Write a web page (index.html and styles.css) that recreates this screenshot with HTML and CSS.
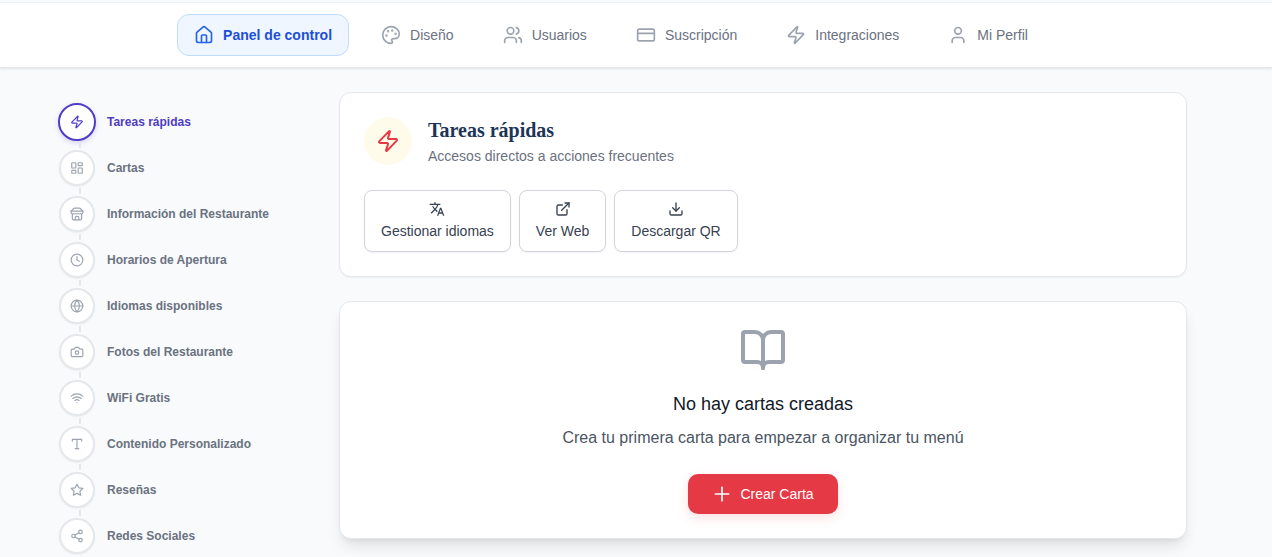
FILE: index.html
```html
<!DOCTYPE html>
<html lang="es">
<head>
<meta charset="utf-8">
<meta name="viewport" content="width=device-width, initial-scale=1">
<title>Panel de control</title>
<link rel="stylesheet" href="styles.css">
</head>
<body>
<header class="topbar">
  <nav class="tabs" aria-label="Principal">
    <a class="tab tab-active" href="#panel" aria-current="page">
      <svg class="icon" viewBox="0 0 24 24"><path d="M15 21v-8a1 1 0 0 0-1-1h-4a1 1 0 0 0-1 1v8"/><path d="M3 10a2 2 0 0 1 .709-1.528l7-5.999a2 2 0 0 1 2.582 0l7 5.999A2 2 0 0 1 21 10v9a2 2 0 0 1-2 2H5a2 2 0 0 1-2-2z"/></svg>
      Panel de control
    </a>
    <a class="tab" href="#diseno">
      <svg class="icon" viewBox="0 0 24 24"><circle class="dot" cx="13.5" cy="6.5" r=".5"/><circle class="dot" cx="17.5" cy="10.5" r=".5"/><circle class="dot" cx="8.5" cy="7.5" r=".5"/><circle class="dot" cx="6.5" cy="12.5" r=".5"/><path d="M12 2C6.5 2 2 6.5 2 12s4.5 10 10 10c.926 0 1.648-.746 1.648-1.688 0-.437-.18-.835-.437-1.125-.29-.289-.438-.652-.438-1.125a1.64 1.64 0 0 1 1.668-1.668h1.996c3.051 0 5.555-2.503 5.555-5.554C21.965 6.012 17.461 2 12 2z"/></svg>
      Diseño
    </a>
    <a class="tab" href="#usuarios">
      <svg class="icon" viewBox="0 0 24 24"><path d="M16 21v-2a4 4 0 0 0-4-4H6a4 4 0 0 0-4 4v2"/><circle cx="9" cy="7" r="4"/><path d="M22 21v-2a4 4 0 0 0-3-3.87"/><path d="M16 3.13a4 4 0 0 1 0 7.75"/></svg>
      Usuarios
    </a>
    <a class="tab" href="#suscripcion">
      <svg class="icon" viewBox="0 0 24 24"><rect width="20" height="14" x="2" y="5" rx="2"/><path d="M2 10h20"/></svg>
      Suscripción
    </a>
    <a class="tab" href="#integraciones">
      <svg class="icon" viewBox="0 0 24 24"><path d="M4 14a1 1 0 0 1-.78-1.63l9.9-10.2a.5.5 0 0 1 .86.46l-1.92 6.02A1 1 0 0 0 13 10h7a1 1 0 0 1 .78 1.63l-9.9 10.2a.5.5 0 0 1-.86-.46l1.92-6.02A1 1 0 0 0 11 14z"/></svg>
      Integraciones
    </a>
    <a class="tab" href="#perfil">
      <svg class="icon" viewBox="0 0 24 24"><path d="M19 21v-2a4 4 0 0 0-4-4H9a4 4 0 0 0-4 4v2"/><circle cx="12" cy="7" r="4"/></svg>
      Mi Perfil
    </a>
  </nav>
</header>

<div class="layout">
  <aside class="sidebar">
    <ul class="steps">
      <li class="step"><a class="step-link step-active" href="#tareas"><span class="bubble"><svg class="icon" viewBox="0 0 24 24"><path d="M4 14a1 1 0 0 1-.78-1.63l9.9-10.2a.5.5 0 0 1 .86.46l-1.92 6.02A1 1 0 0 0 13 10h7a1 1 0 0 1 .78 1.63l-9.9 10.2a.5.5 0 0 1-.86-.46l1.92-6.02A1 1 0 0 0 11 14z"/></svg></span>Tareas rápidas</a></li>
      <li class="step"><a class="step-link" href="#cartas"><span class="bubble"><svg class="icon" viewBox="0 0 24 24"><rect width="7" height="9" x="3" y="3" rx="1"/><rect width="7" height="5" x="14" y="3" rx="1"/><rect width="7" height="9" x="14" y="12" rx="1"/><rect width="7" height="5" x="3" y="16" rx="1"/></svg></span>Cartas</a></li>
      <li class="step"><a class="step-link" href="#informacion"><span class="bubble"><svg class="icon" viewBox="0 0 24 24"><path d="m2 7 4.41-4.41A2 2 0 0 1 7.83 2h8.34a2 2 0 0 1 1.42.59L22 7"/><path d="M4 12v8a2 2 0 0 0 2 2h12a2 2 0 0 0 2-2v-8"/><path d="M15 22v-4a2 2 0 0 0-2-2h-2a2 2 0 0 0-2 2v4"/><path d="M2 7h20"/><path d="M22 7v3a2 2 0 0 1-2 2 2.7 2.7 0 0 1-1.59-.63.7.7 0 0 0-.82 0A2.7 2.7 0 0 1 16 12a2.7 2.7 0 0 1-1.59-.63.7.7 0 0 0-.82 0A2.7 2.7 0 0 1 12 12a2.7 2.7 0 0 1-1.59-.63.7.7 0 0 0-.82 0A2.7 2.7 0 0 1 8 12a2.7 2.7 0 0 1-1.59-.63.7.7 0 0 0-.82 0A2.7 2.7 0 0 1 4 12a2 2 0 0 1-2-2V7"/></svg></span>Información del Restaurante</a></li>
      <li class="step"><a class="step-link" href="#horarios"><span class="bubble"><svg class="icon" viewBox="0 0 24 24"><circle cx="12" cy="12" r="10"/><path d="M12 6v6l4 2"/></svg></span>Horarios de Apertura</a></li>
      <li class="step"><a class="step-link" href="#idiomas"><span class="bubble"><svg class="icon" viewBox="0 0 24 24"><circle cx="12" cy="12" r="10"/><path d="M12 2a14.5 14.5 0 0 0 0 20 14.5 14.5 0 0 0 0-20"/><path d="M2 12h20"/></svg></span>Idiomas disponibles</a></li>
      <li class="step"><a class="step-link" href="#fotos"><span class="bubble"><svg class="icon" viewBox="0 0 24 24"><path d="M14.5 4h-5L7 7H4a2 2 0 0 0-2 2v9a2 2 0 0 0 2 2h16a2 2 0 0 0 2-2V9a2 2 0 0 0-2-2h-3z"/><circle cx="12" cy="13" r="3"/></svg></span>Fotos del Restaurante</a></li>
      <li class="step"><a class="step-link" href="#wifi"><span class="bubble"><svg class="icon" viewBox="0 0 24 24"><path d="M12 20h.01"/><path d="M2 8.82a15 15 0 0 1 20 0"/><path d="M5 12.859a10 10 0 0 1 14 0"/><path d="M8.5 16.429a5 5 0 0 1 7 0"/></svg></span>WiFi Gratis</a></li>
      <li class="step"><a class="step-link" href="#contenido"><span class="bubble"><svg class="icon" viewBox="0 0 24 24"><path d="M4 7V4h16v3"/><path d="M9 20h6"/><path d="M12 4v16"/></svg></span>Contenido Personalizado</a></li>
      <li class="step"><a class="step-link" href="#resenas"><span class="bubble"><svg class="icon" viewBox="0 0 24 24"><path d="M12 2l3.09 6.26L22 9.27l-5 4.87 1.18 6.88L12 17.77l-6.18 3.25L7 14.14 2 9.27l6.91-1.01z"/></svg></span>Reseñas</a></li>
      <li class="step"><a class="step-link" href="#redes"><span class="bubble"><svg class="icon" viewBox="0 0 24 24"><circle cx="18" cy="5" r="3"/><circle cx="6" cy="12" r="3"/><circle cx="18" cy="19" r="3"/><path d="M8.59 13.51l6.83 3.98"/><path d="M15.41 6.51l-6.82 3.98"/></svg></span>Redes Sociales</a></li>
    </ul>
  </aside>

  <main class="content">
    <section class="card" id="tareas">
      <div class="card-head">
        <span class="badge"><svg class="icon" viewBox="0 0 24 24"><path d="M4 14a1 1 0 0 1-.78-1.63l9.9-10.2a.5.5 0 0 1 .86.46l-1.92 6.02A1 1 0 0 0 13 10h7a1 1 0 0 1 .78 1.63l-9.9 10.2a.5.5 0 0 1-.86-.46l1.92-6.02A1 1 0 0 0 11 14z"/></svg></span>
        <div class="card-heading">
          <h2 class="card-title">Tareas rápidas</h2>
          <p class="card-subtitle">Accesos directos a acciones frecuentes</p>
        </div>
      </div>
      <div class="actions">
        <button class="action" type="button">
          <svg class="icon icon-solid" viewBox="0 0 24 24"><path d="m12.87 15.07-2.54-2.51.03-.03A17.52 17.52 0 0 0 14.07 6H17V4h-7V2H8v2H1v1.99h11.17C11.5 7.92 10.44 9.75 9 11.35 8.07 10.32 7.3 9.19 6.69 8h-2c.73 1.63 1.73 3.17 2.98 4.56l-5.09 5.02L4 19l5-5 3.11 3.11.76-2.04zM18.5 10h-2L12 22h2l1.12-3h4.75L21 22h2l-4.5-12zm-2.62 7 1.62-4.33L19.12 17h-3.24z"/></svg>
          Gestionar idiomas
        </button>
        <button class="action" type="button">
          <svg class="icon" viewBox="0 0 24 24"><path d="M15 3h6v6"/><path d="M10 14 21 3"/><path d="M18 13v6a2 2 0 0 1-2 2H5a2 2 0 0 1-2-2V8a2 2 0 0 1 2-2h6"/></svg>
          Ver Web
        </button>
        <button class="action" type="button">
          <svg class="icon" viewBox="0 0 24 24"><path d="M21 15v4a2 2 0 0 1-2 2H5a2 2 0 0 1-2-2v-4"/><path d="m7 10 5 5 5-5"/><path d="M12 15V3"/></svg>
          Descargar QR
        </button>
      </div>
    </section>

    <section class="card card-empty" id="cartas">
      <svg class="icon book" viewBox="0 0 24 24"><path d="M12 7v14"/><path d="M3 18a1 1 0 0 1-1-1V4a1 1 0 0 1 1-1h5a4 4 0 0 1 4 4 4 4 0 0 1 4-4h5a1 1 0 0 1 1 1v13a1 1 0 0 1-1 1h-6a3 3 0 0 0-3 3 3 3 0 0 0-3-3z"/></svg>
      <h3 class="empty-title">No hay cartas creadas</h3>
      <p class="empty-text">Crea tu primera carta para empezar a organizar tu menú</p>
      <button class="create" type="button">
        <svg class="icon" viewBox="0 0 24 24"><path d="M4 12h16"/><path d="M12 4v16"/></svg>
        Crear Carta
      </button>
    </section>
  </main>
</div>
</body>
</html>
```
FILE: styles.css
```css
* {
  box-sizing: border-box;
}

body {
  margin: 0;
  background: #f8fafc;
  color: #6b7280;
  font-family: "Liberation Sans", Arial, sans-serif;
  font-size: 14px;
  line-height: 20px;
}

h2, h3, p, ul {
  margin: 0;
  padding: 0;
}

a {
  color: inherit;
  text-decoration: none;
}

button {
  font: inherit;
  cursor: pointer;
}

.icon {
  display: block;
  flex: none;
  width: 20px;
  height: 20px;
  fill: none;
  stroke: currentColor;
  stroke-width: 2;
  stroke-linecap: round;
  stroke-linejoin: round;
}

.icon .dot {
  fill: currentColor;
}

.icon-solid {
  fill: currentColor;
  stroke: none;
}

/* Top navigation */
.topbar {
  margin-top: 2px;
  padding: 11px 50px 11px 0;
  background: #fff;
  border-top: 1px solid #eceef1;
  border-bottom: 1px solid #e5e7eb;
  box-shadow: 0 1px 2px rgba(0, 0, 0, 0.1);
}

.tabs {
  display: flex;
  justify-content: center;
  gap: 15px;
}

.tab {
  display: flex;
  align-items: center;
  gap: 9px;
  padding: 10px 16px;
  border: 1px solid transparent;
  border-radius: 12px;
  white-space: nowrap;
}

.tab .icon {
  color: #9ca3af;
}

.tab-active {
  background: #eff6ff;
  border-color: #bfdbfe;
  color: #1d4ed8;
  font-weight: 700;
}

.tab-active .icon {
  color: #2563eb;
}

/* Page columns */
.layout {
  display: grid;
  grid-template-columns: 256px minmax(0, 1fr);
  gap: 24px;
  padding: 24px 85px 0 59px;
}

.sidebar {
  padding-top: 7px;
}

.steps {
  list-style: none;
}

.step-link {
  display: flex;
  align-items: center;
  gap: 12px;
  height: 46px;
  font-size: 12px;
  font-weight: 700;
}

.bubble {
  display: grid;
  place-items: center;
  width: 36px;
  height: 36px;
  background: #fff;
  border: 2px solid #e5e7eb;
  border-radius: 50%;
  box-shadow: 0 1px 2px rgba(0, 0, 0, 0.05);
  color: #9ca3af;
}

.bubble .icon {
  width: 14px;
  height: 14px;
}

.step-active {
  color: #4f3cc0;
}

.step-active .bubble {
  width: 38px;
  height: 38px;
  margin: 0 -1px;
  border-color: #4f3cc9;
  box-shadow: 0 2px 5px rgba(79, 60, 201, 0.2);
  color: #4f3cc9;
}

/* Short line joining one bubble to the next */
.step {
  position: relative;
}

.step:not(:last-child)::after {
  content: "";
  position: absolute;
  left: 20px;
  bottom: -3px;
  width: 2px;
  height: 6px;
  background: #e5e7eb;
}

/* Cards */
.content {
  display: grid;
  gap: 24px;
  align-content: start;
  padding-bottom: 18px;
}

.card {
  padding: 24px;
  background: #fff;
  border: 1px solid #e5e7eb;
  border-radius: 12px;
  box-shadow: 0 1px 2px rgba(0, 0, 0, 0.05);
}

.card-head {
  display: flex;
  gap: 16px;
  margin-bottom: 24px;
}

.badge {
  display: grid;
  place-items: center;
  width: 48px;
  height: 48px;
  background: #fffbeb;
  border-radius: 50%;
  color: #e63946;
}

.badge .icon {
  width: 24px;
  height: 24px;
}

.card-title {
  margin-bottom: 3px;
  color: #1d3557;
  font-family: "Liberation Serif", "Times New Roman", serif;
  font-size: 20px;
  line-height: 26px;
}

.actions {
  display: flex;
  flex-wrap: wrap;
  gap: 8px;
}

.action {
  display: flex;
  flex-direction: column;
  align-items: center;
  gap: 4px;
  padding: 10px 16px;
  background: #fff;
  border: 1px solid #d1d5db;
  border-radius: 8px;
  box-shadow: 0 1px 2px rgba(0, 0, 0, 0.05);
  color: #374151;
}

.action .icon {
  width: 16px;
  height: 16px;
}

.card-empty {
  display: flex;
  flex-direction: column;
  align-items: center;
  box-shadow: 0 10px 15px -3px rgba(0, 0, 0, 0.1), 0 4px 6px -4px rgba(0, 0, 0, 0.1);
  text-align: center;
}

.book {
  width: 48px;
  height: 48px;
  margin-bottom: 16px;
  color: #9ca3af;
}

.empty-title {
  margin-bottom: 8px;
  color: #111827;
  font-size: 18px;
  font-weight: 400;
  line-height: 28px;
}

.empty-text {
  margin-bottom: 24px;
  color: #4b5563;
  font-size: 16px;
  line-height: 24px;
}

.create {
  display: flex;
  align-items: center;
  gap: 8px;
  padding: 10px 24px;
  background: #e63946;
  border: 0;
  border-radius: 10px;
  box-shadow: 0 4px 12px rgba(230, 57, 70, 0.15);
  color: #fff;
}
```
